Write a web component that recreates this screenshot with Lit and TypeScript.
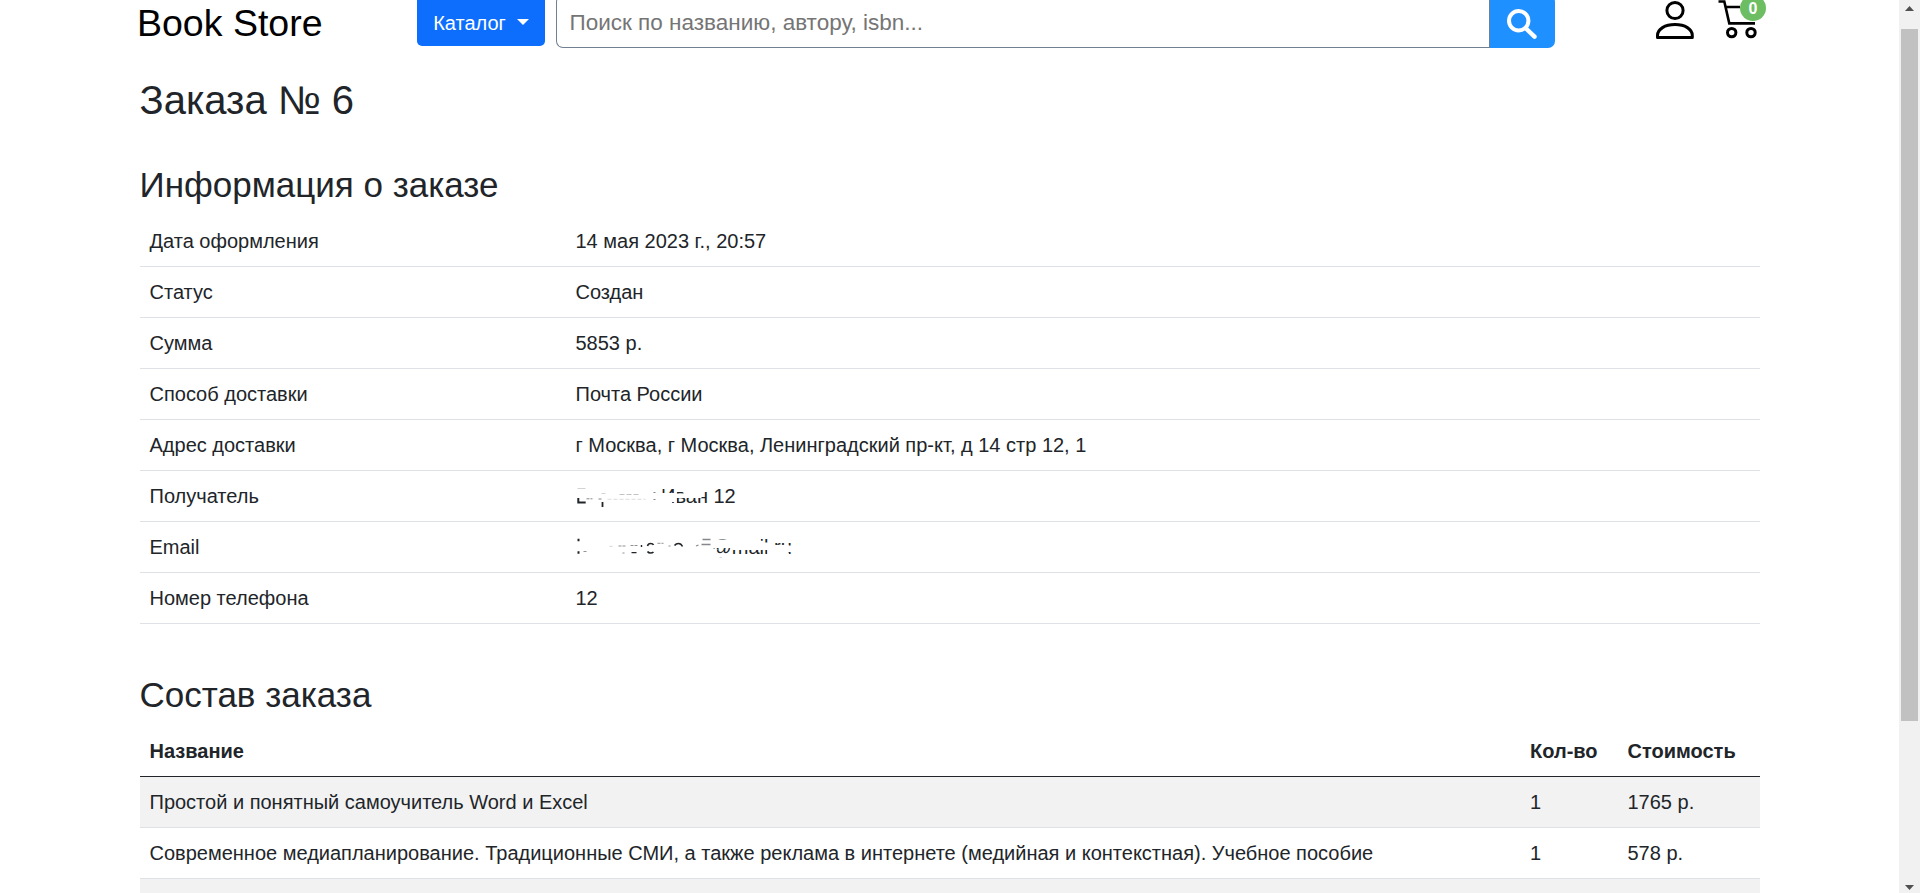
import { LitElement, html, css } from "lit";
import { customElement } from "lit/decorators.js";

// Recipient and e-mail are wiped out on the page: only scraps of the strokes stay visible.
const recipient = html`
  <svg width="230" height="30" viewBox="575.5 481 230 30">
    <clipPath id="name-scraps">
      <path d="M660 487h15v6h-15zM676 491.6h7v2h-7zM671 502h4v2h-4zM676 498h18v7h-18zM694 498h7v6h-7zM701 491h11v14h-11zM712 485h30v22h-30z" />
    </clipPath>
    <text x="660.5" y="503" clip-path="url(#name-scraps)">Иван 12</text>
    <g fill="none" stroke="#212529">
      <path d="M577.8 498v4.4h7.4" stroke-width="2" />
      <path d="M602 502v5" stroke-width="1.8" />
      <path d="M586 498.8h6M598 499h3M653 492.5h2M653 499.5h2" opacity=".55" stroke-dasharray="3 1" />
      <path d="M577 488.5h8M601 493.5h4" opacity=".2" />
      <path d="M619 494.5h20" opacity=".28" stroke-dasharray="5 2" />
      <path d="M607 499.3h38" opacity=".16" stroke-dasharray="4 2" />
    </g>
  </svg>`;

const email = html`
  <svg width="230" height="30" viewBox="575.5 532 230 30">
    <clipPath id="mail-scraps">
      <path d="M716 538h12v1.6h-12zM712 548h20v2h-14zM716 550h16v4h-16zM717 557h8v2h-8zM731 550h36v5h-36zM760 538h9v4.5h-9zM774 543h14v2h-14zM788 543h4v2.5h-4zM788 552h4v2h-4z" />
    </clipPath>
    <text x="711" y="554" clip-path="url(#mail-scraps)">@mail.ru</text>
    <g fill="none" stroke="#212529">
      <path d="M577 540h2M577 552.5h2" stroke-width="2.4" />
      <path d="M583 551.5h4M618 546h8M630 545.5h7M657 543.3h6M622 553h2M668 546h2" opacity=".5" stroke-dasharray="3 1" />
      <path d="M609 546.3h3" opacity=".2" />
      <path d="M631 552.6h5M641 545v2" stroke-width="1.4" />
      <path d="M647 546q.6-2.5 3-2.5 2.4 0 3 1.5M647 551.5q1 1.5 3 1.5 2 0 3-1" stroke-width="1.6" />
      <path d="M674 545.5q1.5-2 4-2 2.6 0 4 3" stroke-width="1.5" />
      <path d="M695.5 546l2.5-1M702 539.5h8M701 544.5h9" opacity=".55" stroke-width="1.3" />
    </g>
  </svg>`;

const INFO: [string, unknown][] = [
  ["Дата оформления", "14 мая 2023 г., 20:57"],
  ["Статус", "Создан"],
  ["Сумма", "5853 р."],
  ["Способ доставки", "Почта России"],
  ["Адрес доставки", "г Москва, г Москва, Ленинградский пр-кт, д 14 стр 12, 1"],
  ["Получатель", recipient],
  ["Email", email],
  ["Номер телефона", "12"],
];

const ITEMS = [
  ["Простой и понятный самоучитель Word и Excel", "1", "1765 р."],
  ["Современное медиапланирование. Традиционные СМИ, а также реклама в интернете (медийная и контекстная). Учебное пособие", "1", "578 р."],
  ["", "", ""],
];

@customElement("app-root")
export class AppRoot extends LitElement {
  static styles = css`
    :host { display: flex; height: 893px; overflow: hidden; background: #fff; color: #212529;
      font: 20px/30px "Liberation Sans", Arial, sans-serif; }
    * { box-sizing: border-box; }
    .page { flex: 1; min-width: 0; overflow: hidden; padding: 0 139px 0 140px; }
    .header { display: flex; height: 48px; align-items: flex-start; }
    .logo { flex: none; width: 277px; margin-left: -3px; padding-top: 2px; font-size: 37.5px; line-height: 43px; color: #000; white-space: nowrap; }
    .catalog { flex: none; width: 128px; height: 51px; margin: -5px 11px 0 3px; border: 0; border-radius: 5px; padding: 4px 1px 0 0; background: #0d6efd; color: #fff;
      display: flex; align-items: center; justify-content: center; gap: 11px; font: inherit; }
    .caret { border: 6px solid transparent; border-top-color: #fff; border-bottom: 0; margin: -1px -1px 0 0; }
    .search { flex: none; display: flex; width: 999px; height: 53px; margin-top: -5px; }
    .field { flex: 1; border: 1px solid #708090; border-right: 0; border-radius: 7px 0 0 7px; padding: 0 12.5px; color: #757575; font-size: 22.5px; line-height: 53px; white-space: nowrap; }
    .go { width: 66px; border-left: 1px solid #708090; border-radius: 0 7px 7px 0; background: #1e90ff; }
    .icons { flex: none; display: flex; margin-left: 100px; gap: 20px; }
    .cart { position: relative; }
    .badge { position: absolute; left: 25px; top: -5px; width: 26px; height: 26px; border-radius: 50%; background: #6dbd63; color: #fff;
      font-size: 16px; font-weight: 700; line-height: 27px; text-align: center; }
    svg { display: block; }
    text { font-size: 20px; fill: #212529; }
    h1, h2 { margin: 0; font-weight: 400; text-indent: -0.5px; }
    h1 { margin-top: 28px; font-size: 40px; line-height: 48px; }
    h2 { font-size: 35px; line-height: 42px; margin-bottom: 10px; }
    .info-title { margin-top: 40px; }
    .items-title { margin-top: 50px; }
    .row { display: grid; grid-template-columns: 426px 1fr; border-bottom: 1px solid #dee2e6; height: 51px; }
    .items .row { grid-template-columns: 1380.5px 97.5px 1fr; }
    .cell { padding: 10px 9px 10px 9.5px; white-space: nowrap; }
    .items .head { font-weight: 700; border-bottom-color: #212529; }
    .odd { background: #f2f2f2; }
    .scroll { flex: none; width: 21px; background: #f1f1f1; display: flex; flex-direction: column; align-items: center; }
    .arrow { height: 29px; padding-top: 6px; }
    .arrow.down { height: auto; margin-top: auto; padding: 0 0 3px; }
    .thumb { width: 17px; height: 692px; background: #c1c1c1; }
  `;

  render() {
    return html`
      <div class="page">
        <div class="header">
          <div class="logo">Book Store</div>
          <button class="catalog">Каталог<span class="caret"></span></button>
          <div class="search">
            <div class="field">Поиск по названию, автору, isbn...</div>
            <div class="go">
              <svg width="65" height="53" viewBox="1490 -5 65 53" fill="none" stroke="#fff" stroke-width="4">
                <circle cx="1518.7" cy="20.7" r="9.7" />
                <path d="M1526 28.5l8.500 8.200" stroke-width="4.4" stroke-linecap="round" />
              </svg>
            </div>
          </div>
          <div class="icons">
            <svg width="40" height="44" viewBox="1655 0 40 44" fill="none" stroke="#000" stroke-width="3" stroke-linejoin="round">
              <circle cx="1675" cy="10.5" r="8.1" />
              <path d="M1657.500 37.500V35.500C1657.500 29 1665 24.600 1675 24.600S1692.300 29 1692.300 35.500V37.500Z" />
            </svg>
            <div class="cart">
              <svg width="52" height="44" viewBox="1715 0 52 44" fill="none" stroke="#000" stroke-width="2.6">
                <path d="M1718.500 1.500H1724.300L1729.300 23.400H1755M1725.500 7H1740" />
                <circle cx="1731.700" cy="32.600" r="4.200" stroke-width="3" />
                <circle cx="1751" cy="32.600" r="4.200" stroke-width="3" />
              </svg>
              <div class="badge">0</div>
            </div>
          </div>
        </div>
        <h1>Заказа № 6</h1>
        <h2 class="info-title">Информация о заказе</h2>
        <div>${INFO.map(([k, v]) => html`<div class="row"><div class="cell">${k}</div><div class="cell">${v}</div></div>`)}</div>
        <h2 class="items-title">Состав заказа</h2>
        <div class="items">
          <div class="row head"><div class="cell">Название</div><div class="cell">Кол-во</div><div class="cell">Стоимость</div></div>
          ${ITEMS.map((r, i) => html`<div class="row ${i % 2 ? "" : "odd"}">${r.map((c) => html`<div class="cell">${c}</div>`)}</div>`)}
        </div>
      </div>
      <div class="scroll">
        <div class="arrow"><svg width="9" height="5" viewBox="0 0 9 5"><path d="M0 5L4.5 0L9 5Z" fill="#505050" /></svg></div>
        <div class="thumb"></div>
        <div class="arrow down"><svg width="9" height="5" viewBox="0 0 9 5"><path d="M0 0L4.5 5L9 0Z" fill="#505050" /></svg></div>
      </div>
    `;
  }
}
